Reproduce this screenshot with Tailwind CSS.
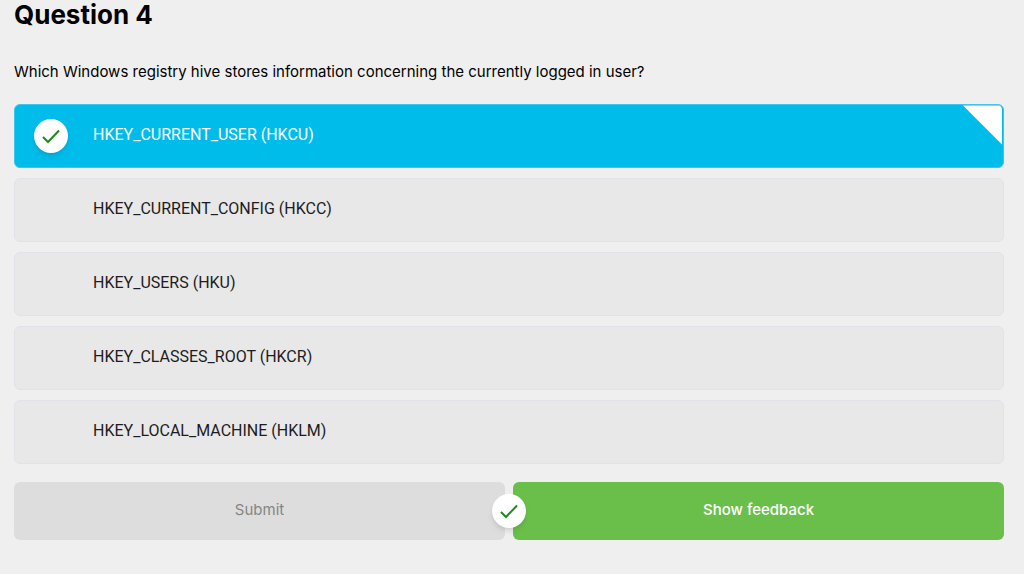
<!DOCTYPE html>
<html lang="en">
<head>
    <meta charset="UTF-8">
    <meta name="viewport" content="width=device-width, initial-scale=1.0">
    <title>Question 4</title>
    <script src="https://cdn.jsdelivr.net/npm/@tailwindcss/browser@4"></script>
</head>
<body class="min-h-screen bg-[#efefef] font-['Inter',sans-serif] text-[15px] leading-6 text-black">
    <form id="quiz" class="pl-3.5 pr-5 pb-8">
        <h1 class="text-[26px] leading-[30px] font-bold">Question 4</h1>
        <p id="prompt" class="mt-[30px]">Which Windows registry hive stores information concerning the currently logged in user?</p>

        <!-- Answers -->
        <div role="radiogroup" aria-labelledby="prompt" class="mt-5 flex flex-col gap-2.5 font-['Roboto',sans-serif] text-base text-[#1c1c22]">
            <label class="group relative flex h-16 cursor-pointer items-center gap-[25px] rounded-md border border-[#e2e3e8] bg-[#e8e8e8] pl-[19px] has-checked:border-[#3cc4ec] has-checked:bg-[#00bceb] has-checked:text-white">
                <span class="grid size-[34px] place-items-center rounded-full group-has-checked:bg-white group-has-checked:shadow-md">
                    <input type="radio" name="answer" value="HKCU" checked class="col-start-1 row-start-1 size-full appearance-none rounded-full">
                    <svg class="pointer-events-none invisible col-start-1 row-start-1 size-5 group-has-checked:visible" viewBox="0 0 20 20" fill="none" stroke="#1d8a1d" stroke-width="2" aria-hidden="true"><path d="M2 11l5 5L18 4.500"/></svg>
                </span>
                <span class="pb-0.5">HKEY_CURRENT_USER (HKCU)</span>
                <svg class="absolute top-0 right-0 hidden size-10 rounded-tr-[5px] pr-px group-has-checked:block" viewBox="0 0 40 40" fill="#fff" aria-hidden="true"><path d="M0 0h40v40z"/></svg>
            </label>
            <label class="group relative flex h-16 cursor-pointer items-center gap-[25px] rounded-md border border-[#e2e3e8] bg-[#e8e8e8] pl-[19px] has-checked:border-[#3cc4ec] has-checked:bg-[#00bceb] has-checked:text-white">
                <span class="size-[34px]"><input type="radio" name="answer" value="HKCC" class="size-full appearance-none rounded-full"></span>
                <span class="pb-0.5">HKEY_CURRENT_CONFIG (HKCC)</span>
            </label>
            <label class="group relative flex h-16 cursor-pointer items-center gap-[25px] rounded-md border border-[#e2e3e8] bg-[#e8e8e8] pl-[19px] has-checked:border-[#3cc4ec] has-checked:bg-[#00bceb] has-checked:text-white">
                <span class="size-[34px]"><input type="radio" name="answer" value="HKU" class="size-full appearance-none rounded-full"></span>
                <span class="pb-0.5">HKEY_USERS (HKU)</span>
            </label>
            <label class="group relative flex h-16 cursor-pointer items-center gap-[25px] rounded-md border border-[#e2e3e8] bg-[#e8e8e8] pl-[19px] has-checked:border-[#3cc4ec] has-checked:bg-[#00bceb] has-checked:text-white">
                <span class="size-[34px]"><input type="radio" name="answer" value="HKCR" class="size-full appearance-none rounded-full"></span>
                <span class="pb-0.5">HKEY_CLASSES_ROOT (HKCR)</span>
            </label>
            <label class="group relative flex h-16 cursor-pointer items-center gap-[25px] rounded-md border border-[#e2e3e8] bg-[#e8e8e8] pl-[19px] has-checked:border-[#3cc4ec] has-checked:bg-[#00bceb] has-checked:text-white">
                <span class="size-[34px]"><input type="radio" name="answer" value="HKLM" class="size-full appearance-none rounded-full"></span>
                <span class="pb-0.5">HKEY_LOCAL_MACHINE (HKLM)</span>
            </label>
        </div>

        <!-- Actions -->
        <div class="relative mt-[18px] grid grid-cols-2 gap-2">
            <button type="submit" disabled class="h-[58px] rounded-md bg-[#ddd] pb-0.5 text-[#858585]">Submit</button>
            <button type="button" class="h-[58px] cursor-pointer rounded-md bg-[#6abf4b] pb-0.5 font-medium text-white">Show feedback</button>
            <span class="absolute top-1/2 left-1/2 grid size-[34px] -translate-1/2 place-items-center rounded-full bg-white shadow-md">
                <svg class="size-5" viewBox="0 0 20 20" fill="none" stroke="#1d8a1d" stroke-width="2" aria-hidden="true"><path d="M2 11l5 5L18 4.500"/></svg>
            </span>
        </div>
    </form>
</body>
</html>
